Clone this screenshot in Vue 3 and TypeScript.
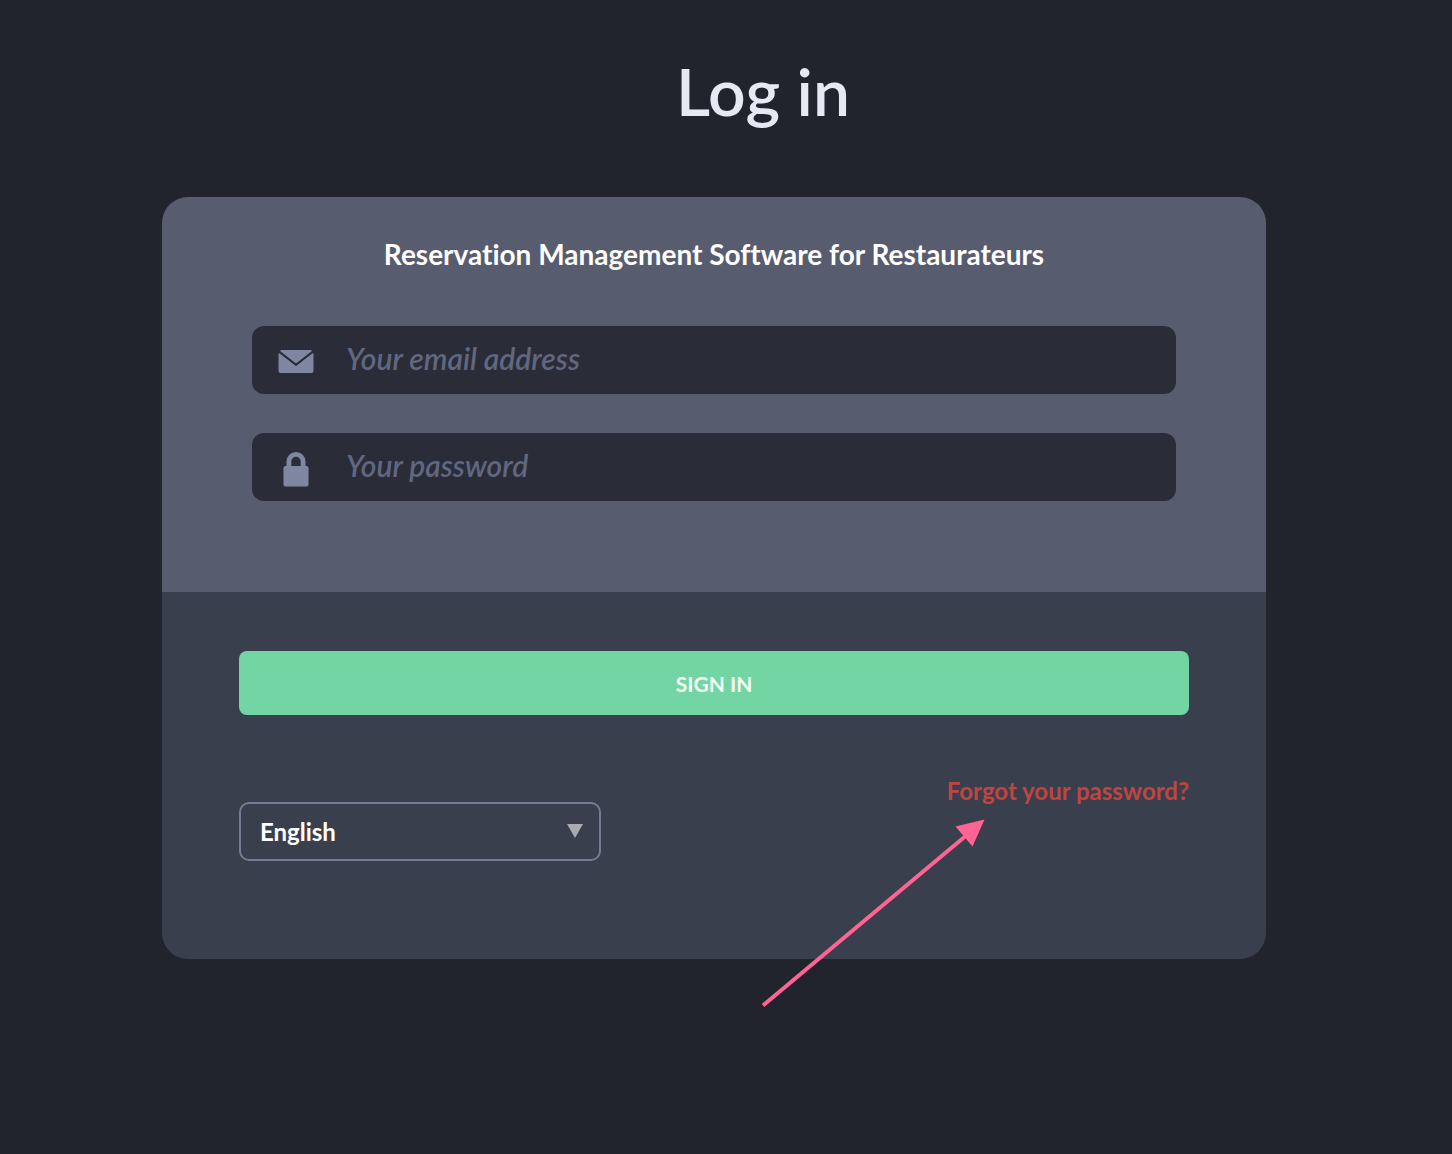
<script setup lang="ts">
import { ref } from 'vue'

const email = ref('')
const password = ref('')
const language = ref('English')
const languages: string[] = ['English', 'Deutsch', 'Español', 'Français', 'Italiano']
</script>

<template>
  <main class="page">
    <h1 class="title">Log in</h1>
    <form class="card" @submit.prevent>
      <section class="fields">
        <h2 class="subtitle">Reservation Management Software for Restaurateurs</h2>
        <label class="field">
          <svg class="icon" viewBox="0 0 36 36" aria-hidden="true">
            <path d="M2 7.500Q2 6 3.500 6H32.500Q34 6 34 7.500L18 20Z" />
            <path d="M.5 10.500Q.5 9 1.600 9L18 21.800 34.400 9Q35.500 9 35.500 10.500V27Q35.500 29 33.500 29H2.500Q.5 29 .5 27Z" />
            <path class="fold" d="M1 7.500L18 20.800 35 7.500" />
          </svg>
          <input v-model="email" class="input" type="email" placeholder="Your email address" aria-label="Your email address" />
        </label>
        <label class="field">
          <svg class="icon" viewBox="0 0 36 36" aria-hidden="true">
            <path fill-rule="evenodd" d="M8.500 15V10.500A9.500 9.500 0 0 1 27.500 10.500V15H28.500Q30.500 15 30.500 17V33.500Q30.500 35.500 28.500 35.500H7.500Q5.500 35.500 5.500 33.500V17Q5.500 15 7.500 15ZM13.300 15H22.700V10.500A4.700 4.700 0 0 0 13.300 10.500Z" />
          </svg>
          <input v-model="password" class="input" type="password" placeholder="Your password" aria-label="Your password" />
        </label>
      </section>
      <section class="actions">
        <button class="submit" type="submit">SIGN IN</button>
        <div class="options">
          <div class="language">
            <select v-model="language" class="select" aria-label="Language">
              <option v-for="item in languages" :key="item">{{ item }}</option>
            </select>
            <svg class="caret" viewBox="0 0 16 14" aria-hidden="true"><path d="M0 0H16L8 14Z" /></svg>
          </div>
          <a class="forgot" href="#">Forgot your password?</a>
        </div>
      </section>
      <svg class="pointer" viewBox="0 0 226 192" aria-hidden="true">
        <path class="shaft" d="M3 187.500L208 16" />
        <path class="head" d="M224.500 1.500L195.500 8.500 212.500 28.500Z" />
      </svg>
    </form>
  </main>
</template>

<style>
body {
  margin: 0;
  background: #22242d;
}
</style>

<style scoped>
.page {
  box-sizing: border-box;
  min-height: 100vh;
  padding: 51px 186px 64px 162px;
  background: #22242d;
  font-family: Lato, "Open Sans", sans-serif;
  font-weight: 700;
  font-variant-ligatures: none;
}

.title {
  margin: 0 0 66px;
  padding-left: 98px;
  color: #e5e9f4;
  font-size: 66px;
  line-height: 80px;
  font-weight: 600;
  text-align: center;
}

.card {
  position: relative;
}

.fields {
  display: flex;
  flex-direction: column;
  gap: 39px;
  padding: 39px 90px 91px;
  border-radius: 26px 26px 0 0;
  background: #575c6e;
}

.subtitle {
  margin: 0 0 15px;
  color: #fff;
  font-size: 28px;
  line-height: 36px;
  font-weight: 700;
  text-align: center;
}

.field {
  display: flex;
  align-items: center;
  height: 68px;
  border-radius: 12px;
  background: #2a2c37;
}

.icon {
  flex: none;
  width: 36px;
  height: 36px;
  margin: 4px 32px 0 26px;
  fill: #7e86a1;
}

.fold {
  fill: none;
  stroke: #2a2c37;
  stroke-width: 2;
}

.input {
  flex: 1;
  min-width: 0;
  height: 64px;
  padding: 0 24px 4px 0;
  border: 0;
  outline: 0;
  background: transparent;
  color: #e5e9f4;
  font: inherit;
  font-size: 30px;
  font-weight: 600;
  font-variant-ligatures: none;
}

.input::placeholder {
  color: #606780;
  font-style: italic;
  opacity: 1;
}

.actions {
  padding: 59px 77px 98px;
  border-radius: 0 0 26px 26px;
  background: #3a3f4d;
}

.submit {
  display: block;
  width: 100%;
  height: 64px;
  padding: 0;
  border: 0;
  border-radius: 8px;
  background: #72d5a3;
  color: #f4fff6;
  font: inherit;
  font-size: 21px;
}

.options {
  display: flex;
  align-items: flex-start;
  justify-content: space-between;
  margin-top: 60px;
}

.language {
  position: relative;
  width: 362px;
  margin-top: 27px;
}

.select {
  display: block;
  width: 100%;
  height: 59px;
  padding: 0 48px 0 19px;
  appearance: none;
  border: 2px solid #757c95;
  border-radius: 10px;
  background: transparent;
  color: #fff;
  font: inherit;
  font-size: 24px;
}

.caret {
  position: absolute;
  top: 22px;
  right: 18px;
  width: 16px;
  height: 14px;
  fill: #a9abae;
  pointer-events: none;
}

.forgot {
  color: #bf4540;
  font-size: 24px;
  line-height: 32px;
  text-decoration: none;
}

.pointer {
  position: absolute;
  right: 280px;
  bottom: -51px;
  width: 226px;
  height: 192px;
  pointer-events: none;
}

.shaft {
  fill: none;
  stroke: #ff6492;
  stroke-width: 4;
}

.head {
  fill: #ff6492;
}
</style>
